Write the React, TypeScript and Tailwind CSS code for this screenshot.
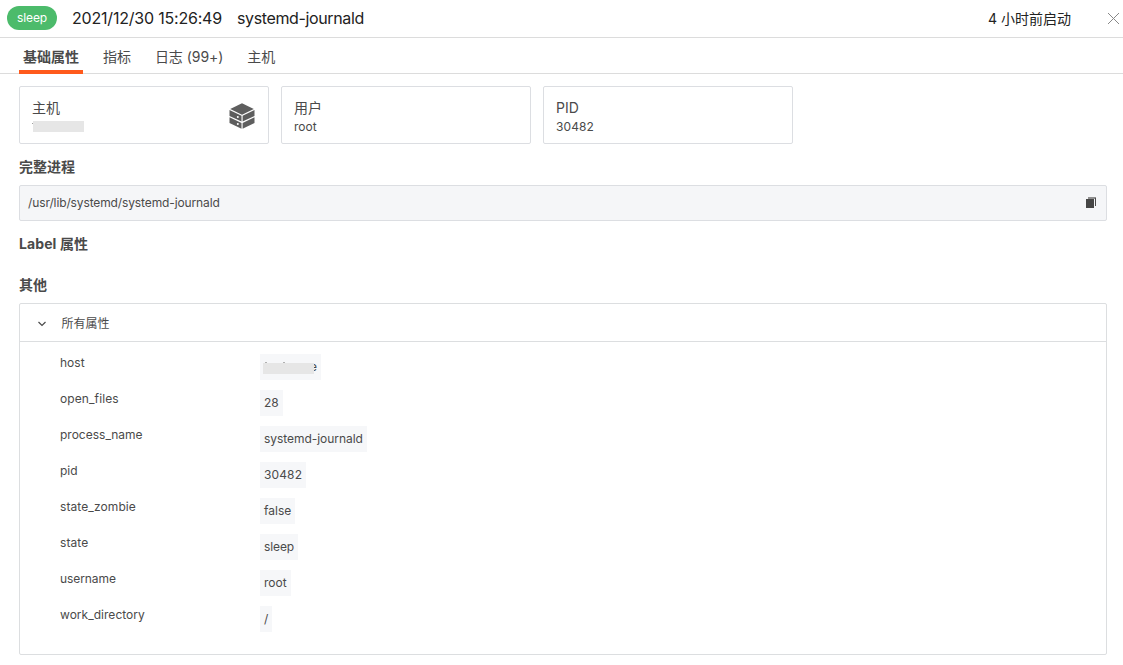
import React from "react";

const tabs = [
  { label: "基础属性", active: true },
  { label: "指标", active: false },
  { label: "日志 (99+)", active: false },
  { label: "主机", active: false },
];

const attributes = [
  { name: "open_files", value: "28", nameClass: "tracking-[0.1px]", valueClass: "" },
  { name: "process_name", value: "systemd-journald", nameClass: "", valueClass: "tracking-[-0.05px]" },
  { name: "pid", value: "30482", nameClass: "", valueClass: "tracking-[0.12px]" },
  { name: "state_zombie", value: "false", nameClass: "tracking-[0.1px]", valueClass: "" },
  { name: "state", value: "sleep", nameClass: "tracking-[0.1px]", valueClass: "tracking-[-0.1px]" },
  { name: "username", value: "root", nameClass: "tracking-[-0.08px]", valueClass: "" },
  { name: "work_directory", value: "/", nameClass: "tracking-[0.03px]", valueClass: "" },
];

function ServerIcon() {
  return (
    <svg className="h-[26px] w-[26px]" viewBox="0 0 26 26" fill="#5e5e5e">
      <path d="M13 .3 24.8 6 13 11.7 1.2 6z" />
      <path d="M.5 7 12.5 12.8v5.8L.5 12.9z" />
      <path d="M25.5 7 13.6 12.8v5.8l11.9-5.7z" />
      <path d="M.5 14.2 12.5 20v5.8L.5 20.1z" />
      <path d="M25.5 14.2 13.6 20v5.8l11.9-5.7z" />
      <circle cx="8.8" cy="13.9" r="1" fill="#fff" />
      <circle cx="8.8" cy="21.1" r="1" fill="#fff" />
    </svg>
  );
}

function Card({ title, children }: { title: string; children: React.ReactNode }) {
  return (
    <div className="flex h-[58px] w-[250px] items-start justify-between rounded-[2px] border border-[#dcdee2] pt-[11px] pr-[13px] pl-3">
      <div>
        <div className="h-5 text-sm leading-5">{title}</div>
        {children}
      </div>
      {title === "主机" && (
        <div className="pt-[5px]">
          <ServerIcon />
        </div>
      )}
    </div>
  );
}

function Row({
  name,
  nameClass = "",
  valueClass = "",
  children,
}: {
  name: string;
  nameClass?: string;
  valueClass?: string;
  children: React.ReactNode;
}) {
  return (
    <div className="flex h-9 items-start">
      <div className={`w-[200px] leading-[18px] ${nameClass}`}>{name}</div>
      <div className={`h-[26px] bg-[#f6f7f9] px-1 leading-[26px] ${valueClass}`}>{children}</div>
    </div>
  );
}

export default function App() {
  return (
    <div className="h-[665px] w-[1123px] overflow-hidden bg-white font-['Inter','Noto_Sans_CJK_SC',sans-serif] text-xs text-[#4a4a4a]">
      <header className="flex h-[38px] items-center border-b border-[#dcdcdc] pr-[3px] pb-[2px] pl-[7px] text-base text-[#222]">
        <span className="flex h-6 w-[50px] items-center justify-center rounded-full bg-[#4cbb6b] text-xs tracking-[-0.1px] text-white">sleep</span>
        <span className="ml-[15px] w-[165px] whitespace-nowrap tracking-[-0.2px]">2021/12/30 15:26:49</span>
        <span className="whitespace-nowrap tracking-[-0.37px]">systemd-journald</span>
        <span className="mt-[2px] mr-[36px] ml-auto whitespace-nowrap text-sm">4 小时前启动</span>
        <svg className="mt-px h-[13px] w-[13px]" viewBox="0 0 13 13" fill="none" stroke="#888">
          <path d="M1 1l11 11M12 1L1 12" />
        </svg>
      </header>
      <nav className="flex h-9 gap-4 border-b border-[#dcdcdc] pl-[19px] text-sm">
        {tabs.map((tab) => (
          <div
            key={tab.label}
            className={
              tab.active
                ? "h-9 border-b-4 border-[#ff5a1c] px-1 pt-[9px] leading-5 font-bold whitespace-nowrap"
                : "h-9 px-1 pt-[9px] leading-5 tracking-[-0.05px] whitespace-nowrap"
            }
          >
            {tab.label}
          </div>
        ))}
      </nav>
      <main className="pt-3 pr-4 pl-[19px]">
        <div className="flex gap-3">
          <Card title="主机">
            <div className="flex items-start">
              <div className="mt-[5px] h-px w-px bg-[#a0a0a0]" />
              <div className="mt-[3px] h-[11px] w-[51px] bg-[#e6e6e6]" />
            </div>
          </Card>
          <Card title="用户">
            <div className="leading-[18px]">root</div>
          </Card>
          <Card title="PID">
            <div className="leading-[18px] tracking-[0.1px]">30482</div>
          </Card>
        </div>
        <h2 className="mt-[13px] h-5 text-sm leading-5 font-bold">完整进程</h2>
        <div className="mt-2 flex h-9 items-center justify-between rounded-[2px] border border-[#dcdee2] bg-[#f5f6f8] pr-[9px] pl-2">
          <span className="tracking-[-0.12px]">/usr/lib/systemd/systemd-journald</span>
          <svg className="h-3 w-3" viewBox="0 0 12 12">
            <path d="M3 0h8v2H3z" fill="#8f8f8f" />
            <path d="M10 1h1v8h-1z" fill="#4a4a4a" />
            <path d="M1 2h8v9H1z" fill="#464646" />
          </svg>
        </div>
        <h2 className="mt-[13px] h-5 text-sm leading-5 font-bold tracking-[0.1px]">Label 属性</h2>
        <h2 className="mt-[21px] h-5 text-sm leading-5 font-bold">其他</h2>
        <section className="mt-2 h-[352px] rounded-[2px] border border-[#dcdee0]">
          <div className="flex h-[38px] items-center border-b border-[#dcdee0] pl-[18px]">
            <svg className="mt-[3px] mr-[15.5px] h-2 w-2" viewBox="0 0 8 8" fill="none" stroke="#4a4a4a" strokeWidth="1.2">
              <path d="M.5 2 4 5.5 7.5 2" />
            </svg>
            <span className="mt-[2px]">所有属性</span>
          </div>
          <div className="pt-3 pl-10">
            <Row name="host">
              <div className="flex h-[26px] w-[53px] items-start">
                <div className="z-10 mt-2 -ml-px w-[51px] shrink-0">
                  <div className="flex h-px gap-4 pl-[2px]">
                    <div className="h-px w-[2px] bg-[#b0b0b0]" />
                    <div className="h-px w-[2px] bg-[#b0b0b0]" />
                  </div>
                  <div className="h-[11px] bg-[#e6e6e6]" />
                </div>
                <span className="-ml-1">e</span>
              </div>
            </Row>
            {attributes.map((item) => (
              <Row key={item.name} name={item.name} nameClass={item.nameClass} valueClass={item.valueClass}>
                {item.value}
              </Row>
            ))}
          </div>
        </section>
      </main>
    </div>
  );
}
